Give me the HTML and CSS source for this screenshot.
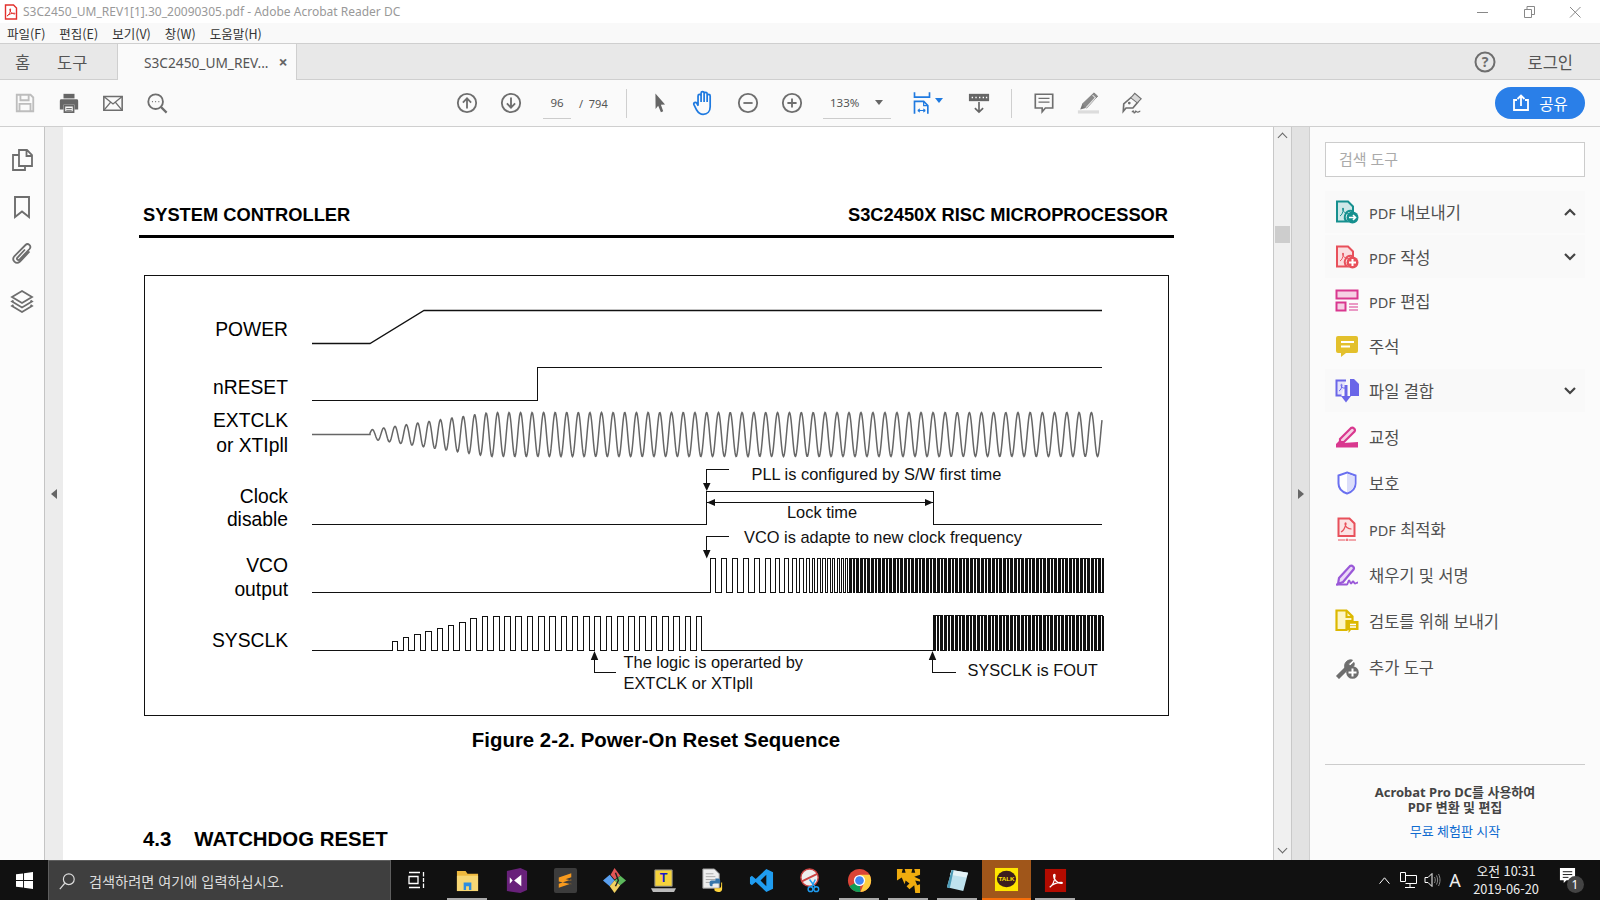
FILE: index.html
```html
<!DOCTYPE html>
<html lang="ko">
<head>
<meta charset="utf-8">
<title>S3C2450_UM_REV1[1].30_20090305.pdf - Adobe Acrobat Reader DC</title>
<link rel="stylesheet" href="styles.css">
</head>
<body>
<header class="titlebar">
  <svg class="app-ico" viewBox="0 0 14 16"><path d="M1.500 1h8l3 3v11h-11z" fill="#fff" stroke="#e2302c" stroke-width="1.400"/><path d="M3 12c2-1 3-3 3.600-6 .2-1.200-.6-1.800-.8-.8-.2 1.600 1.200 4.200 4.800 4.800.8 0 .6-.8-.2-.8-3 0-5.600 1-7.400 2.800z" fill="none" stroke="#e2302c"/></svg>
  <span class="title-text">S3C2450_UM_REV1[1].30_20090305.pdf - Adobe Acrobat Reader DC</span>
  <div class="win-ctrls">
    <svg class="win-btn" viewBox="0 0 46 20"><path d="M17 10.500h11" stroke="#888" fill="none"/></svg>
    <svg class="win-btn" viewBox="0 0 46 20"><path d="M18.500 7.500h7v8h-7zM21 7.500v-3h7.500v8h-3" stroke="#888" fill="none"/></svg>
    <svg class="win-btn" viewBox="0 0 46 20"><path d="M18 5l10.500 10.500M28.500 5L18 15.500" stroke="#888" fill="none"/></svg>
  </div>
</header>
<nav class="menubar">
  <span class="menu-item">파일(F)</span><span class="menu-item">편집(E)</span><span class="menu-item">보기(V)</span><span class="menu-item">창(W)</span><span class="menu-item">도움말(H)</span>
</nav>
<div class="tabbar">
  <span class="nav-tab nav-home">홈</span>
  <span class="nav-tab nav-tools">도구</span>
  <div class="doc-tab"><span class="doc-tab-name">S3C2450_UM_REV...</span><span class="doc-tab-x">×</span></div>
  <svg class="help-ico" viewBox="0 0 24 24"><circle cx="12" cy="12" r="9.500" fill="none" stroke="#6e6e6e" stroke-width="2"/><text x="12" y="16.500" text-anchor="middle" class="help-q">?</text></svg>
  <span class="login">로그인</span>
</div>
<div class="toolbar">
  <div class="tb-group tb-file">
    <button class="tb-btn"><svg viewBox="0 0 24 24"><path d="M3 3h15l3 3v15H3z" fill="none" stroke="#bdbdbd" stroke-width="2"/><path d="M7 3v6h9V3M6 21v-8h12v8" fill="none" stroke="#bdbdbd" stroke-width="2"/></svg></button>
    <button class="tb-btn"><svg viewBox="0 0 24 24"><path d="M6 2h12v5H6z" fill="#666"/><path d="M3 8h18a2 2 0 0 1 1 2v9h-4v-5H6v5H2v-9a2 2 0 0 1 1-2z" fill="#666"/><path d="M7 15h10v7H7z" fill="none" stroke="#666" stroke-width="1.800"/><path d="M9 18h6M9 20h6" stroke="#666"/></svg></button>
    <button class="tb-btn"><svg viewBox="0 0 24 24"><path d="M2 5h20v15H2z" fill="none" stroke="#6e6e6e" stroke-width="1.700"/><path d="M2 5l10 8 10-8M2 20l7.500-9M22 20l-7.500-9" fill="none" stroke="#6e6e6e" stroke-width="1.500"/></svg></button>
    <button class="tb-btn"><svg viewBox="0 0 24 24"><circle cx="10.500" cy="10.500" r="8" fill="none" stroke="#6e6e6e" stroke-width="2"/><path d="M16.500 16.500l6 6" stroke="#6e6e6e" stroke-width="2.400"/><path d="M6.500 10.500h1M10 10.500h1M13.500 10.500h1" stroke="#6e6e6e" stroke-width="1.600"/></svg></button>
  </div>
  <div class="tb-group tb-nav">
    <button class="tb-btn"><svg viewBox="0 0 24 24"><circle cx="12" cy="12" r="10" fill="none" stroke="#6e6e6e" stroke-width="2"/><path d="M12 18V7M7.500 11.500L12 7l4.500 4.500" fill="none" stroke="#6e6e6e" stroke-width="2"/></svg></button>
    <button class="tb-btn"><svg viewBox="0 0 24 24"><circle cx="12" cy="12" r="10" fill="none" stroke="#6e6e6e" stroke-width="2"/><path d="M12 6v11M7.500 12.500L12 17l4.500-4.500" fill="none" stroke="#6e6e6e" stroke-width="2"/></svg></button>
    <span class="page-field">96</span><span class="page-total">/&nbsp;&nbsp;794</span>
  </div>
  <span class="tb-sep tb-sep-a"></span>
  <div class="tb-group tb-view">
    <button class="tb-btn"><svg viewBox="0 0 24 24"><path d="M7 1.500l10.500 12-4.500.5 2.500 7-2.500 1-3-7-2.800 3.500z" fill="#666"/></svg></button>
    <button class="tb-btn tb-hand"><svg viewBox="0 0 24 24"><path d="M6.500 14.500V5.500a1.400 1.400 0 0 1 2.800 0V11M9.300 11V3a1.400 1.400 0 0 1 2.800 0v8M12.100 11V3.500a1.400 1.400 0 0 1 2.800 0V11M14.900 11V5.500a1.400 1.400 0 0 1 2.800 0v10c0 4-2.500 7-6.500 7-3 0-4.500-1.500-6-4l-2.500-5c-.8-1.800 1.500-2.800 2.700-1.200l1.300 2.200" fill="none" stroke="#1f7ae0" stroke-width="1.600"/></svg></button>
    <button class="tb-btn"><svg viewBox="0 0 24 24"><circle cx="12" cy="12" r="10" fill="none" stroke="#6e6e6e" stroke-width="2"/><path d="M7 12h10" stroke="#6e6e6e" stroke-width="2"/></svg></button>
    <button class="tb-btn"><svg viewBox="0 0 24 24"><circle cx="12" cy="12" r="10" fill="none" stroke="#6e6e6e" stroke-width="2"/><path d="M7 12h10M12 7v10" stroke="#6e6e6e" stroke-width="2"/></svg></button>
    <div class="zoom-field"><span>133%</span><i class="caret"></i></div>
    <button class="tb-btn tb-fit"><svg viewBox="0 0 24 28"><path d="M3 1v6h18V1" fill="none" stroke="#1f7ae0" stroke-width="2"/><path d="M3 27V12h11l5 5v10" fill="none" stroke="#1f7ae0" stroke-width="2"/><path d="M14 12v5h5" fill="none" stroke="#1f7ae0" stroke-width="1.500"/><path d="M7 23h9M7 23l2.500-2M7 23l2.500 2M16 23l-2.500-2M16 23l-2.500 2" fill="none" stroke="#1f7ae0" stroke-width="1.300"/></svg><i class="caret caret-blue"></i></button>
    <button class="tb-btn tb-scroll"><svg viewBox="0 0 24 24"><path d="M1 2h22v8H1z" fill="#666"/><path d="M4 6h1.500M8 6h1.500M12 6h1.500M16 6h1.500M19.500 6h1.500" stroke="#fff" stroke-width="1.500"/><path d="M12 11v11M7.500 17.500L12 22l4.500-4.500" fill="none" stroke="#666" stroke-width="1.800"/></svg></button>
  </div>
  <span class="tb-sep tb-sep-b"></span>
  <div class="tb-group tb-edit">
    <button class="tb-btn"><svg viewBox="0 0 24 24"><path d="M2.500 2.500h19v15h-8l-3.500 4v-4H2.500z" fill="none" stroke="#6e6e6e" stroke-width="1.800"/><path d="M6 7h12M6 11h12" stroke="#6e6e6e" stroke-width="1.500"/></svg></button>
    <button class="tb-btn"><svg viewBox="0 0 24 24"><path d="M18.500 1l4 3.500-12 13-5-4z" fill="#8a8a8a" stroke="#777" stroke-width="1"/><path d="M17 3.500l3 2.700L10 17" fill="none" stroke="#e4e4e4" stroke-width="1.200"/><path d="M5.500 13.500l-2 5.500 6-1.500z" fill="#777"/><path d="M1 20h23v3.500H1z" fill="#dcdcdc"/></svg></button>
    <button class="tb-btn"><svg viewBox="0 0 24 24"><path d="M11 6l7 5.500-5 6H5.500L2.500 21 3 13z" fill="none" stroke="#6e6e6e" stroke-width="1.800"/><path d="M11 6l4-4.500 7 6-4 4" fill="#d8d8d8" stroke="#6e6e6e" stroke-width="1.200"/><circle cx="9" cy="12" r="1.500" fill="#6e6e6e"/><path d="M12 22c1-2 2-2 2 0s2 0 2-1 1 1 2 1 2-1 3-1" fill="none" stroke="#6e6e6e" stroke-width="1.400"/></svg></button>
  </div>
  <button class="share-btn"><svg viewBox="0 0 18 18"><path d="M5 6H2v10h14V6h-3" fill="none" stroke="#fff" stroke-width="1.800"/><path d="M9 12V2M5.500 5L9 1.500 12.500 5" fill="none" stroke="#fff" stroke-width="1.800"/></svg><span>공유</span></button>
</div>
<main class="main">
  <aside class="rail">
    <svg viewBox="0 0 24 24"><path d="M9 2h8l5 5v11H9zM16.500 2v6H22M9 7H3v15h12v-4" fill="none" stroke="#6e6e6e" stroke-width="1.800"/></svg>
    <svg viewBox="0 0 24 24"><path d="M5 2h14v20l-7-5.500L5 22z" fill="none" stroke="#6e6e6e" stroke-width="1.900"/></svg>
    <svg viewBox="0 0 24 24"><path d="M19.500 9.500l-9.500 10c-4 3.500-9-1.500-5.500-5.500L15.500 3c2.500-2.500 6.500 1 4 4l-10 10.500c-1.500 1.500-3.500-.5-2-2L15 7.500" fill="none" stroke="#6e6e6e" stroke-width="1.800"/></svg>
    <svg viewBox="0 0 24 24"><path d="M12 2l10 6-10 6L2 8z" fill="none" stroke="#6e6e6e" stroke-width="1.800"/><path d="M3.500 11.500L2 12.500l10 6 10-6-1.500-1M3.500 16L2 17l10 6 10-6-1.500-1" fill="none" stroke="#6e6e6e" stroke-width="1.800"/></svg>
  </aside>
  <div class="strip strip-left"><i class="tri tri-left"></i></div>
  <section class="doc">
    <div class="pdf-head"><span>SYSTEM CONTROLLER</span><span>S3C2450X RISC MICROPROCESSOR</span></div>
    <svg class="diagram" viewBox="140 268 1040 450">
      <rect x="144.500" y="275.500" width="1024" height="440" class="d-box"/>
      <text class="d-label" x="288" y="336">POWER</text>
      <text class="d-label" x="288" y="394">nRESET</text>
      <text class="d-label" x="288" y="427">EXTCLK</text>
      <text class="d-label" x="288" y="452">or XTIpll</text>
      <text class="d-label" x="288" y="503">Clock</text>
      <text class="d-label" x="288" y="526">disable</text>
      <text class="d-label" x="288" y="572">VCO</text>
      <text class="d-label" x="288" y="596">output</text>
      <text class="d-label" x="288" y="647">SYSCLK</text>
      <path class="d-line" d="M312 343.500H370L424 310.500H1102"/>
      <path class="d-line d-crisp" d="M312 400.500H537.500V367.500H1102"/>
      <path id="wave-ext" class="d-wave" d=""/>
      <path class="d-line d-crisp" d="M312 524.500H706.500V491.500H933.500V524.500H1102"/>
      <path id="wave-vco" class="d-line d-crisp" d=""/>
      <path id="wave-sys" class="d-line d-crisp" d=""/>
      <path class="d-line d-crisp" d="M729 469.500H706.500V484M707 502.500H933M729 536.500H706.500V551M594.500 660V672.500H616M932.500 660V672.500H956"/>
      <path class="d-arrow" d="M703 483h7.500l-3.750 8zM703 550h7.500l-3.750 8.500zM707 502.500l8-3.500v7zM933 502.500l-8-3.500v7zM594.500 651l3.750 9h-7.500zM932.500 651l3.750 9h-7.500z"/>
      <text class="d-note" x="751.500" y="480">PLL is configured by S/W first time</text>
      <text class="d-note" x="787" y="518">Lock time</text>
      <text class="d-note" x="744" y="543">VCO is adapte to new clock frequency</text>
      <text class="d-note" x="623.500" y="668">The logic is operarted by</text>
      <text class="d-note" x="623.500" y="689">EXTCLK or XTIpll</text>
      <text class="d-note" x="967.500" y="676">SYSCLK is FOUT</text>
    </svg>
    <p class="pdf-caption">Figure 2-2. Power-On Reset Sequence</p>
    <h2 class="pdf-heading"><span>4.3</span><span>WATCHDOG RESET</span></h2>
  </section>
  <div class="vscroll"><i class="chev-up"></i><i class="thumb"></i><i class="chev-down"></i></div>
  <div class="strip strip-right"><i class="tri tri-right"></i></div>
  <aside class="panel">
    <div class="tool-search">검색 도구</div>
    <ul class="tools">
      <li class="tool tool-group">
        <svg viewBox="0 0 24 24"><path d="M2 1.500h11l5 5V11h-1a6 6 0 0 0-5 10.500H2z" fill="#cfe8e8" stroke="#16908f" stroke-width="2"/><path d="M5 16c2-1 3-4 3.500-7 0-1.500-1-1.500-1 0 0 2 3 5 6 4.500" fill="none" stroke="#16908f"/><circle cx="17.500" cy="17.500" r="6" fill="#16908f"/><path d="M14 17.500h6.500M18 15l2.500 2.500-2.500 2.500" fill="none" stroke="#fff" stroke-width="1.600"/></svg>
        <span><span class="latin">PDF</span> 내보내기</span><svg class="chev" viewBox="0 0 14 10"><path d="M2 8l5-5 5 5" fill="none" stroke="#444" stroke-width="2.200"/></svg>
      </li>
      <li class="tool tool-group">
        <svg viewBox="0 0 24 24"><path d="M2 1.500h11l5 5V11h-1a6 6 0 0 0-5 10.500H2z" fill="#fbdfe1" stroke="#e8505b" stroke-width="2"/><path d="M5 16c2-1 3-4 3.500-7 0-1.500-1-1.500-1 0 0 2 3 5 6 4.500" fill="none" stroke="#e8505b"/><circle cx="17.500" cy="17.500" r="6" fill="#e8505b"/><path d="M14 17.500h7M17.500 14v7" stroke="#fff" stroke-width="2"/></svg>
        <span><span class="latin">PDF</span> 작성</span><svg class="chev" viewBox="0 0 14 10"><path d="M2 2l5 5 5-5" fill="none" stroke="#444" stroke-width="2.200"/></svg>
      </li>
      <li class="tool">
        <svg viewBox="0 0 24 24"><path d="M1.500 1.500h21v8h-21z" fill="#f6d0e4" stroke="#d9388f" stroke-width="2"/><path d="M1.500 13.500h9v8h-9z" fill="#f6d0e4" stroke="#d9388f" stroke-width="2"/><path d="M14 15h9M14 18h9M14 21h9" stroke="#d9388f" stroke-width="1.200"/></svg>
        <span><span class="latin">PDF</span> 편집</span>
      </li>
      <li class="tool">
        <svg viewBox="0 0 24 24"><path d="M3 2h18a2 2 0 0 1 2 2v13a2 2 0 0 1-2 2H11l-5 4v-4H3a2 2 0 0 1-2-2V4a2 2 0 0 1 2-2z" fill="#e3c02c"/><path d="M6 8h13M6 12.500h9" stroke="#fff" stroke-width="2"/></svg>
        <span>주석</span>
      </li>
      <li class="tool tool-group">
        <svg viewBox="0 0 24 24"><path d="M11 1.500H1.500v15h5" fill="#e4e3fb" stroke="#6a66e8" stroke-width="2"/><path d="M4 12c2-1 2.500-3 3-6 0-1-1-1-1 0 0 2 2 3.500 4 3" fill="none" stroke="#6a66e8"/><path d="M15 0h4l5 5v12H15z" fill="#6a66e8"/><path d="M11 6v12" stroke="#6a66e8" stroke-width="3"/><path d="M6 17h10l-5 6.500z" fill="#6a66e8"/></svg>
        <span>파일 결합</span><svg class="chev" viewBox="0 0 14 10"><path d="M2 2l5 5 5-5" fill="none" stroke="#444" stroke-width="2.200"/></svg>
      </li>
    </ul>
    <ul class="tools tools-b">
      <li class="tool">
        <svg viewBox="0 0 24 24"><path d="M5 14L16 3c2-1.500 5 1.500 3.500 3.500L9 17H5z" fill="#f6d0e4" stroke="#d9388f" stroke-width="2.200"/><path d="M1 19l4-4 3 3 15-1v5.500H1z" fill="#d9388f"/></svg>
        <span>교정</span>
      </li>
      <li class="tool">
        <svg viewBox="0 0 24 24"><path d="M12 1.500l8.500 3v8c0 5-4 8.500-8.500 10-4.500-1.500-8.500-5-8.500-10v-8z" fill="#fff" stroke="#6a70f0" stroke-width="2"/><path d="M12 2.500v19c4-1.500 7.500-4.500 7.500-9V5.500z" fill="#dcdefa"/></svg>
        <span>보호</span>
      </li>
      <li class="tool">
        <svg viewBox="0 0 24 24"><path d="M3.500 1.500h11l5 5V19h-16z" fill="#fbe3e4" stroke="#e8505b" stroke-width="2"/><path d="M6 15c2-1 4-4 5-8 .2-1.500-1-1.500-1 0 0 2.500 3 5 6.500 5" fill="none" stroke="#e8505b" stroke-width="1.200"/><path d="M3 23h7M14 23h7" stroke="#e8505b"/><circle cx="12" cy="23" r="1" fill="none" stroke="#e8505b"/></svg>
        <span><span class="latin">PDF</span> 최적화</span>
      </li>
      <li class="tool">
        <svg viewBox="0 0 24 24"><path d="M4 15L15 3c2-1.500 5 1.500 3.500 3.500L8 19l-5 2z" fill="#ead9f7" stroke="#9a58d8" stroke-width="2.200"/><path d="M1 21.500h11c1 0 1-4 2-4s1 3 2 3 1-2 2-2 1 2 2 2 2-1 3-1" fill="none" stroke="#9a58d8" stroke-width="1.800"/></svg>
        <span>채우기 및 서명</span>
      </li>
      <li class="tool">
        <svg viewBox="0 0 24 24"><path d="M1.500 1.500h10l6 6v4.500h-6v9h-10z" fill="#fdf5c4" stroke="#dcb800" stroke-width="2.200"/><path d="M11.500 2v6h6" fill="none" stroke="#dcb800" stroke-width="2"/><path d="M12 12h11.500v9H16l-2.500 3v-3H12z" fill="#dcb800"/><path d="M15 15.500h6M15 18h6" stroke="#fff" stroke-width="1.300"/></svg>
        <span>검토를 위해 보내기</span>
      </li>
      <li class="tool">
        <svg viewBox="0 0 24 24"><path d="M2 21l8-8c-1-3 0-6 3-7.500 1.500-.8 3-.8 4.500-.2L13.500 9l1.500 2 4-3.500c.5 1.500.2 3-.5 4" fill="#6e6e6e" stroke="#6e6e6e"/><path d="M2 21l2 2 8-8-2-2z" fill="#6e6e6e" stroke="#6e6e6e" stroke-width="1.500"/><circle cx="17.500" cy="17.500" r="6.300" fill="#6e6e6e"/><path d="M13.500 17.500h8M17.500 13.500v8" stroke="#fff" stroke-width="2"/></svg>
        <span>추가 도구</span>
      </li>
    </ul>
    <div class="promo">
      <p class="promo-text">Acrobat Pro DC를 사용하여<br>PDF 변환 및 편집</p>
      <p class="promo-link">무료 체험판 시작</p>
    </div>
  </aside>
</main>
<footer class="taskbar">
  <div class="start"><svg viewBox="0 0 18 18"><path d="M0 2.500l7.500-1v7H0zM8.500 1.300L18 0v8.500H8.500zM0 9.500h7.500v7L0 15.500zM8.500 9.500H18V18l-9.500-1.300z" fill="#fff"/></svg></div>
  <div class="task-search"><svg viewBox="0 0 20 20"><circle cx="12" cy="8" r="6" fill="none" stroke="#ddd" stroke-width="1.300"/><path d="M7.500 12.500L2 19" stroke="#ddd" stroke-width="1.300"/></svg><span>검색하려면 여기에 입력하십시오.</span></div>
  <div class="taskview"><svg viewBox="0 0 18 18"><path d="M1 1.500h11M1 16.500h11M1 5.500h9v7H1zM15.500 1v4.500M15.500 7v4M15.500 12.500V17" fill="none" stroke="#fff" stroke-width="1.300"/></svg></div>
  <div class="task open"><svg viewBox="0 0 26 26"><path d="M2 3h9l2 3h11v18H2z" fill="#eeb93f"/><path d="M2 8h22v16H2z" fill="#f7d774"/><path d="M9 23v-8h8v8h-2.500v-4h-3v4z" fill="#2d8de0"/></svg></div>
  <div class="task"><svg viewBox="0 0 26 26"><path d="M17 0l7 3v20l-7 3-14-2V3z" fill="#68217a"/><path d="M18 7v12l-7.500-6zM6 9.500l3 3.500-3 3.500z" fill="#fff"/></svg></div>
  <div class="task"><svg viewBox="0 0 26 26"><rect x="1" y="0" width="24" height="26" rx="2" fill="#3c3c3c"/><path d="M6 10l13-4.500v4L6 14zM6 10l13 3v4L6 14zM6 20.500l13-4.500v-4L6 16.500z" fill="#f79a1e"/></svg></div>
  <div class="task"><svg viewBox="0 0 26 26"><path d="M13 0l6 8-6 4-4-5z" fill="#e25555"/><path d="M1 13l7-6 5 6-5 6z" fill="#5aa0f0"/><path d="M25 13l-6-5-6 5 6 5z" fill="#5cb85c"/><path d="M13 26l-5-7 5-6 6 5z" fill="#f0d060"/><path d="M14 5l3 8-3 6" fill="none" stroke="#222" stroke-width="1.500"/></svg></div>
  <div class="task"><svg viewBox="0 0 26 26"><path d="M4 2h18v17H4z" fill="#f5d33c" stroke="#888"/><path d="M0 21h26l-2 4H2z" fill="#bbb"/><text x="13" y="15" text-anchor="middle" class="ico-t">T</text></svg></div>
  <div class="task"><svg viewBox="0 0 26 26"><path d="M3 1h12l5 5v15H3z" fill="#eee" stroke="#999"/><path d="M6 6h8M6 9h10M6 12h10M6 15h8" stroke="#aaa"/><path d="M16 11h3a2 2 0 0 1 2 2v3h-6c-2 0-2 1-2 2v1h-2a2 2 0 0 1-1-2v-2c0-1 1-2 2-2h4z" fill="#3776ab"/><path d="M23 15v7c0 2-2 3-4 3s-4-1-4-2v-2h5c2 0 2-2 2-3v-3z" fill="#ffd43b"/></svg></div>
  <div class="task"><svg viewBox="0 0 26 26"><path d="M18 1l7 3.500v17L18 25 7 14.500l-4 3.500-2-1.500v-7L3 8l4 3.500z" fill="#1f9cf0"/><path d="M18 7l-6 6 6 6z" fill="#0f1113"/></svg></div>
  <div class="task"><svg viewBox="0 0 26 26"><circle cx="12" cy="10" r="9" fill="#eee" stroke="#c44" stroke-width="1.500"/><path d="M4 14l16-8" stroke="#c44" stroke-width="2"/><path d="M12 12l6 8M18 12l-4 8" stroke="#1f9cf0" stroke-width="1.500" fill="none"/><circle cx="13" cy="22" r="2.500" fill="none" stroke="#1f9cf0" stroke-width="1.500"/><circle cx="19" cy="22" r="2.500" fill="none" stroke="#1f9cf0" stroke-width="1.500"/></svg></div>
  <div class="task open"><svg viewBox="0 0 26 26"><circle cx="13" cy="13" r="12" fill="#db4437"/><path d="M13 13L2.500 19A12 12 0 0 0 14 25z" fill="#0f9d58"/><path d="M13 7h10.500A12 12 0 0 1 14 25l4-10z" fill="#ffcd40"/><circle cx="13" cy="13" r="5.800" fill="#fff"/><circle cx="13" cy="13" r="4.500" fill="#4285f4"/></svg></div>
  <div class="task open"><svg viewBox="0 0 26 26"><path d="M1 1h6l-1 4h4L9 1h8l-1 4h4l-1-4h6v6l-6 2 6 3v2l-5-1 2 5 3-1v9h-5l-1-8-5 4-3-3 3-3-4-3-1 4-3-7-5 3z" fill="#f0ac0e"/></svg></div>
  <div class="task open"><svg viewBox="0 0 26 26"><path d="M7 2l17 3-5 19L2 20z" fill="#bfe2ee"/><path d="M7 2l17 3-2 5L5 7z" fill="#e5f3f7"/><path d="M2 20l5-18 2 .4L5 21z" fill="#4d9cb8"/></svg></div>
  <div class="task task-active"><svg viewBox="0 0 26 26"><rect x="1" y="1" width="24" height="24" fill="#fee500"/><ellipse cx="13" cy="12.500" rx="10" ry="8.500" fill="#3c1e1e"/><text x="13" y="15" text-anchor="middle" class="ico-talk">TALK</text></svg></div>
  <div class="task open"><svg viewBox="0 0 26 26"><rect x="2" y="1" width="22" height="24" fill="#b30b00"/><path d="M7 20c3-2 5-7 5.500-12 .2-2-1.500-2-1.500 0 0 4 4 8 8 8 1.500 0 1.500-1 0-1-4 0-9 2-12 5z" fill="none" stroke="#fff" stroke-width="1.300"/></svg></div>
  <div class="tray">
    <svg class="tray-chev" viewBox="0 0 14 10"><path d="M1.500 8.500L7 2l5.500 6.500" fill="none" stroke="#fff" stroke-width="1.100"/></svg>
    <svg class="tray-net" viewBox="0 0 18 18"><path d="M1.500 1.500h5v9h-5zM6.500 4.500h11v8h-11M11 12.500v4M6 16.500h10" fill="none" stroke="#fff"/></svg>
    <svg class="tray-vol" viewBox="0 0 18 18"><path d="M2 6.500h3l4-4v13l-4-4H2z" fill="none" stroke="#fff"/><path d="M11.500 6c1 2 1 4 0 6M13.500 4.500c1.500 3 1.500 6 0 9M15.500 3c2 4 2 8 0 12" fill="none" stroke="#888"/></svg>
    <span class="tray-ime">A</span>
    <div class="clock"><span>오전 10:31</span><span>2019-06-20</span></div>
    <div class="notif"><svg viewBox="0 0 18 18"><path d="M1 1h16v13H8l-3 3v-3H1z" fill="#fff"/><path d="M4 5h10M4 8h10M4 11h6" stroke="#111"/></svg><span class="notif-badge">1</span></div>
  </div>
</footer>
<script src="app.js"></script>
</body>
</html>
```

FILE: styles.css
```css
* { box-sizing: border-box; }
html, body { margin: 0; padding: 0; }
body {
  width: 1600px; height: 900px; overflow: hidden;
  display: flex; flex-direction: column;
  font-family: "Noto Sans", "Noto Sans CJK KR", sans-serif;
  color: #505050; background: #fff;
}
ul, p, h2 { margin: 0; padding: 0; list-style: none; }
i { display: block; }
button { border: 0; background: none; padding: 0; font: inherit; }

.titlebar { height: 23px; flex: none; display: flex; align-items: center; background: #fff; padding-left: 4px; }
.app-ico { width: 14px; height: 16px; margin-right: 5px; }
.title-text { font-size: 12px; color: #999; white-space: nowrap; }
.win-ctrls { margin-left: auto; display: flex; margin-right: 2px; }
.win-btn { width: 46px; height: 20px; }

.menubar { height: 21px; flex: none; display: flex; align-items: center; background: #f9f9f9; border-bottom: 1px solid #cfcfcf; padding-left: 7px; }
.menu-item { font-size: 12.500px; color: #333; white-space: nowrap; margin-right: 14px; font-family: "Noto Sans CJK KR", sans-serif; }

.tabbar { height: 36px; flex: none; display: flex; align-items: center; background: #e8e8e8; border-bottom: 1px solid #cfcfcf; position: relative; }
.nav-tab { font-size: 16.500px; color: #555; flex: none; }
.nav-home { margin-left: 15px; width: 42px; }
.nav-tools { width: 60px; }
.doc-tab { width: 180px; height: 36px; align-self: flex-start; background: #fafafa; border-right: 1px solid #cfcfcf; border-left: 1px solid #cfcfcf; display: flex; align-items: center; padding-left: 26px; flex: none; }
.doc-tab-name { font-size: 13.700px; color: #555; white-space: nowrap; }
.doc-tab-x { font-size: 16px; font-weight: 700; color: #666; margin-left: 10px; }
.help-ico { width: 24px; height: 24px; margin-left: auto; }
.help-q { font: 700 14px "Noto Sans", sans-serif; fill: #6e6e6e; }
.login { font-size: 16.500px; color: #555; margin: 0 27px 0 30px; }

.toolbar { height: 47px; flex: none; display: flex; align-items: center; background: #fafafa; border-bottom: 1px solid #cfcfcf; position: relative; }
.tb-group { display: flex; align-items: center; }
.tb-btn { width: 44px; height: 32px; display: flex; align-items: center; justify-content: center; flex: none; }
.tb-btn svg { width: 22px; height: 22px; }
.tb-file { margin-left: 3px; }
.tb-nav { margin-left: 266px; }
.page-field { width: 28px; margin-left: 10px; height: 32px; border-bottom: 1px solid #ccc; text-align: center; font-size: 11.500px; line-height: 32px; color: #555; }
.page-total { margin-left: 8px; width: 28px; font-size: 11px; color: #555; white-space: nowrap; }
.tb-sep { width: 1px; height: 29px; background: #cfcfcf; flex: none; }
.tb-sep-a { margin-left: 19px; }
.tb-view { margin-left: 11px; }
.tb-btn.tb-hand svg { width: 26px; height: 26px; }
.zoom-field { width: 68px; margin-left: 9px; height: 32px; border-bottom: 1px solid #ccc; display: flex; align-items: center; padding-left: 7px; font-size: 11.500px; color: #555; }
.caret { width: 0; height: 0; border: 4px solid transparent; border-top: 5px solid #666; border-bottom: 0; margin-left: auto; margin-right: 8px; }
.caret-blue { border-top-color: #1f7ae0; margin: 0 0 6px 3px; }
.tb-btn.tb-fit { margin-left: 8px; justify-content: flex-start; padding-left: 13px; }
.tb-btn.tb-fit svg { width: 20px; height: 26px; flex: none; }
.tb-scroll { margin-left: 14px; }
.tb-sep-b { margin-left: 10px; }
.tb-edit { margin-left: 10px; }
.share-btn { margin-left: auto; margin-right: 15px; width: 90px; height: 32px; border-radius: 16px; background: #2a7fe8; color: #fff; display: flex; align-items: center; justify-content: center; gap: 9px; font-size: 15.500px; }
.share-btn svg { width: 18px; height: 18px; }

.main { flex: 1; min-height: 0; display: flex; }
.rail { width: 45px; flex: none; background: #fcfcfc; border-right: 1px solid #c4c4c4; display: flex; flex-direction: column; align-items: center; padding-top: 21px; gap: 23px; }
.rail svg { width: 24px; height: 24px; }
.strip { flex: none; display: flex; align-items: center; justify-content: center; }
.strip-left { width: 18px; background: #ececec; }
.strip-right { width: 18px; background: #e2e2e2; border-right: 1px solid #d0d0d0; }
.tri { width: 0; height: 0; border: 5px solid transparent; }
.tri-left { border-right: 6px solid #666; border-left: 0; }
.tri-right { border-left: 6px solid #666; border-right: 0; }

.doc { flex: 1; min-width: 0; background: #fff; overflow: hidden; font-family: "Liberation Sans", sans-serif; color: #000; }
.pdf-head { margin: 76px 0 0 76px; width: 1035px; height: 35px; border-bottom: 3px solid #000; display: flex; justify-content: space-between; padding: 0 6px 0 4px; font-size: 18.300px; font-weight: 700; line-height: 24px; }
.diagram { display: block; width: 1040px; height: 450px; margin: 30px 0 0 77px; }
.d-box { fill: none; stroke: #111; stroke-width: 1.200; shape-rendering: crispEdges; }
.d-label { font: 19.300px "Liberation Sans", sans-serif; text-anchor: end; fill: #000; }
.d-note { font: 16.400px "Liberation Sans", sans-serif; fill: #111; }
.d-line { fill: none; stroke: #111; stroke-width: 1.300; }
.d-crisp { shape-rendering: crispEdges; stroke-width: 1; }
.d-wave { fill: none; stroke: #666; stroke-width: 1.500; }
.d-arrow { fill: #111; }
.pdf-caption { text-align: center; margin-top: 10px; width: 1186px; font-size: 20.400px; font-weight: 700; line-height: 24px; }
.pdf-heading { margin: 75px 0 0 80px; font-size: 20.400px; font-weight: 700; line-height: 24px; display: flex; gap: 23px; }

.vscroll { width: 19px; flex: none; background: #f0f0f0; border-left: 1px solid #c8c8c8; border-right: 1px solid #c8c8c8; position: relative; }
.chev-up, .chev-down { position: absolute; left: 5px; width: 7px; height: 7px; border-left: 1.800px solid #666; border-top: 1.800px solid #666; transform: rotate(45deg); top: 7px; }
.chev-down { transform: rotate(225deg); top: auto; bottom: 8px; }
.thumb { position: absolute; left: 1px; right: 1px; top: 99px; height: 17px; background: #cdcdcd; }

.panel { width: 290px; flex: none; background: #fbfbfb; display: flex; flex-direction: column; font-size: 16.500px; }
.latin { font-size: 14.500px; }
.tool-search { margin: 15px 15px 0; height: 35px; border: 1px solid #ccc; background: #fff; padding-left: 13px; font-size: 15px; line-height: 33px; color: #aaa; flex: none; }
.tools { margin: 12.600px 15px 0; flex: none; }
.tools-b { margin-top: .6px; }
.tool { height: 44.700px; display: flex; align-items: center; padding: 0 8px 0 10px; color: #505050; gap: 10px; white-space: nowrap; }
.tools-b .tool { height: 46px; }
.tool > svg:first-child { width: 24px; height: 24px; flex: none; }
.tool-group { background: #f9f9f9; border-top: 1px solid #fbfbfb; border-bottom: 1px solid #fbfbfb; }
.chev { width: 14px; height: 10px; margin-left: auto; }
.promo { margin: auto 15px 0; height: 96px; border-top: 1px solid #ccc; text-align: center; padding-top: 20px; font-size: 13.500px; }
.promo-text { font-weight: 700; line-height: 15px; color: #444; font-size: 13px; }
.promo-link { margin-top: 9px; color: #0f6bd0; line-height: 15px; font-size: 13px; }

.taskbar { height: 40px; flex: none; background: #111; display: flex; align-items: center; color: #fff; }
.start { width: 48px; height: 40px; display: flex; align-items: center; justify-content: center; flex: none; }
.start svg { width: 17px; height: 17px; }
.task-search { width: 343px; height: 40px; background: #3f3f3f; border: 1px solid #5e5e5e; border-bottom: 0; display: flex; align-items: center; padding-left: 9px; flex: none; gap: 13px; color: #ddd; font-size: 14.200px; font-family: "Noto Sans CJK KR", sans-serif; white-space: nowrap; }
.task-search svg { width: 18px; height: 18px; flex: none; }
.taskview { width: 52px; flex: none; display: flex; justify-content: center; }
.taskview svg { width: 18px; height: 18px; }
.task { width: 49px; height: 40px; display: flex; align-items: center; justify-content: center; flex: none; position: relative; }
.task svg { width: 25px; height: 25px; }
.task.open::after { content: ""; position: absolute; left: 4px; width: 40px; bottom: 0; height: 2px; background: #aaa; }
.task-active { background: #a0561a; border-bottom: 2px solid #f76e0a; }
.ico-t { font: 700 13px "Liberation Sans", sans-serif; fill: #1a1ac8; }
.ico-talk { font: 700 6.500px "Liberation Sans", sans-serif; fill: #fee500; }
.tray { margin-left: auto; display: flex; align-items: center; height: 40px; }
.tray-chev { width: 13px; height: 9px; margin-right: 8.500px; }
.tray-net { width: 18px; height: 18px; margin-right: 6px; }
.tray-vol { width: 18px; height: 18px; margin-right: 4px; }
.tray-ime { font-size: 18px; width: 20px; text-align: center; color: #eee; }
.clock { width: 82px; margin-left: 0; display: flex; flex-direction: column; align-items: center; font-size: 12.800px; line-height: 18px; color: #eee; font-family: "Noto Sans CJK KR", sans-serif; white-space: nowrap; }
.notif { width: 22px; height: 26px; margin: 0 19.500px 0 11.500px; position: relative; }
.notif svg { width: 17px; height: 17px; }
.notif-badge { position: absolute; left: 8px; top: 9px; width: 17px; height: 17px; border-radius: 50%; background: #444; font-size: 12px; line-height: 17px; text-align: center; color: #fff; }
```

FILE: app.js
```js
// Builds the long repetitive traces of the timing diagram.
function crisp(x) { return Math.floor(x) + 0.5; }

function buildSine() {
  let d = "M312 434.5H370";
  let phase = 0;
  for (let x = 370; x <= 1102; x += 0.5) {
    const amp = Math.min(22, 4.5 + (x - 370) / 120 * 17.5);
    const period = 11.3 + (x - 370) / 732;
    phase += Math.PI * 2 * 0.5 / period;
    d += "L" + x + " " + (434.5 - amp * Math.sin(phase)).toFixed(2);
  }
  return d;
}

function buildTrain(d, start, end, top, low, step) {
  let x = start, up = true;
  while (x < end) {
    d += "H" + crisp(x) + "V" + (up ? top(x) : low);
    up = !up;
    x += step(x);
  }
  return d;
}

// Near-solid comb of the fast clock: mostly touching lines, with thin gaps.
function denseSteps() {
  const cycle = [1, 1, 2, 1, 2, 1, 1, 2];
  let i = 0;
  return () => cycle[i++ % cycle.length];
}

function vcoSteps() {
  const dense = denseSteps();
  return (x) => {
    if (x < 760) return 5.5;
    if (x < 810) return 5.5 - (x - 760) / 50 * 2.7;
    if (x < 848) return 2.8 - (x - 810) / 38 * 0.8;
    return dense();
  };
}

function sysTop(x) {
  const t = Math.min(1, Math.max(0, (x - 392) / 89));
  return crisp(641 - t * 25);
}

document.getElementById("wave-ext").setAttribute("d", buildSine());
document.getElementById("wave-vco").setAttribute("d",
  buildTrain("M312 592.5", 710, 1104, () => 558.5, 592.5, vcoSteps()));

let sys = buildTrain("M312 650.5", 392, 702.5, sysTop, 650.5, () => 310 / 55);
sys = buildTrain(sys, 933, 1104, () => 615.5, 650.5, denseSteps());
sys += "V650.5";
document.getElementById("wave-sys").setAttribute("d", sys);
```
